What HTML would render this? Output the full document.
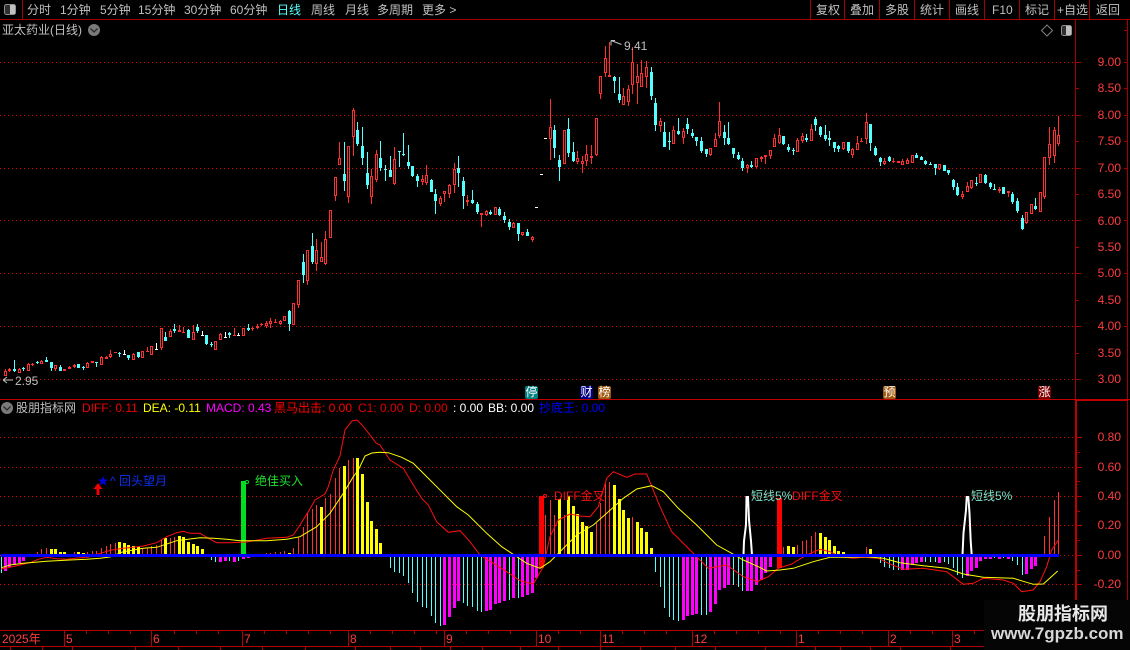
<!DOCTYPE html>
<html><head><meta charset="utf-8"><style>
html,body{margin:0;padding:0;background:#000;}
#p{position:relative;width:1130px;height:650px;overflow:hidden;background:#000;font:12px/14px "Liberation Sans","WenQuanYi Zen Hei","Noto Sans CJK SC",sans-serif;color:#c0c0c0;}
#p div{position:absolute;white-space:nowrap;}
#s{position:absolute;left:0;top:0;}
.a{color:#ff3c3c;width:40px;text-align:right;left:1081px;}
.b{color:#fff;width:13px;height:13px;top:386px;border-radius:2px;text-align:center;line-height:13px;}
.g{color:#ff3c3c;top:632px;}
</style></head><body><div id="p">
<svg id="s" width="1130" height="650" shape-rendering="crispEdges">
<g stroke="#e00000" stroke-dasharray="1 3" fill="none">
<path d="M0 62.5H1075M0 115.5H1075M0 168.5H1075M0 220.5H1075M0 273.5H1075M0 326.5H1075M0 379.5H1075M0 437.5H1075M0 467.5H1075M0 496.5H1075M0 525.5H1075M0 584.5H1075M0 555.5H1075"/>
</g>
<g stroke="#a80000" fill="none">
<path d="M0 19.5H1130M22.5 0V19M810.5 0V19M844.5 0V19M879.5 0V19M914.5 0V19M949.5 0V19M984.5 0V19M1019.5 0V19M1054.5 0V19M1089.5 0V19"/>
<path d="M1075.5 20V400M1127.5 20V600"/>
<path d="M1076 62.5H1081M1076 88.5H1079M1076 115.5H1081M1076 141.5H1079M1076 168.5H1081M1076 194.5H1079M1076 220.5H1081M1076 247.5H1079M1076 273.5H1081M1076 300.5H1079M1076 326.5H1081M1076 353.5H1079M1076 379.5H1081"/>
<path d="M1077 437.5H1082M1077 452.5H1080M1077 467.5H1082M1077 481.5H1080M1077 496.5H1082M1077 511.5H1080M1077 525.5H1082M1077 540.5H1080M1077 555.5H1082M1077 570.5H1080M1077 584.5H1082"/>
<path d="M1124 30.5H1127M1124 62.5H1127M1124 88.5H1127M1124 115.5H1127M1124 141.5H1127M1124 168.5H1127M1124 220.5H1127M1124 273.5H1127M1124 326.5H1127"/>
</g>
<path id="cr" fill="#ff3030"/>
<path id="cc" fill="#54ffff"/>
<path id="cw" fill="#ffffff"/>
<path id="bc" fill="#54ffff"/>
<path id="bm" fill="#ff00ff"/>
<path id="br" fill="#ff3030"/>
<path id="by" fill="#ffff00"/>
<rect x="539" y="496" width="5" height="72" fill="#ff0000"/>
<rect x="777" y="498" width="5" height="70" fill="#ff0000"/>
<rect x="241" y="481" width="5" height="74" fill="#00e020"/>
<g fill="none" shape-rendering="auto">
<polyline id="ld" stroke="#ff1010" stroke-width="1"/>
<polyline id="le" stroke="#ffff00" stroke-width="1"/>
<polyline stroke="#fff" stroke-width="2" points="743.5,555 744,541 746,525 746.5,497 748,497 749,520 751,541 752,555"/>
<polyline stroke="#fff" stroke-width="2" points="962.5,555 963.5,533 966,510 966.7,497 968.3,497 969.5,513 970.7,541 971.7,555"/>
<circle cx="247" cy="482" r="1.5" stroke="#00e020"/>
<circle cx="545" cy="496" r="1.5" stroke="#ff1010"/>
<path d="M3 380H13M3 380l4-3M3 380l4 3" stroke="#c0c0c0"/>
<path d="M621.5 44.5L611 40.5M611 40.5h4M611 40.5v5" stroke="#c0c0c0"/>
<path d="M103 476l1.3 3.4 3.7.2-2.9 2.3 1 3.6-3.1-2-3.1 2 1-3.6-2.9-2.3 3.7-.2z" fill="#0000e0"/>
</g>
<rect x="1" y="554" width="1058" height="3" fill="#0000ff"/>
<path d="M98 483l-4.5 6h3v6h3v-6h3z" fill="#f00000"/>
<rect x="0" y="399" width="1130" height="1" fill="#c00000"/>
<rect x="1075" y="399" width="53" height="2" fill="#c00000"/>
<rect x="1075" y="399" width="2" height="201" fill="#c00000"/>
<g stroke="#b40000" fill="none">
<path id="tk" d="M0 630.5H984M0 646.5H984M64.5 630V646M151.5 630V646M242.5 630V646M348.5 630V646M444.5 630V646M536.5 630V646M600.5 630V646M692.5 630V646M796.5 630V646M888.5 630V646M952.5 630V646"/>
</g>
<g shape-rendering="auto" fill="none">
<circle cx="94" cy="30" r="6" fill="#7a7a7a"/><path d="M90.5 28.5l3.5 3.5 3.5-3.5" stroke="#2a2a2a" stroke-width="1.3"/>
<circle cx="7" cy="408" r="6" fill="#7a7a7a"/><path d="M3.5 406.5l3.5 3.5 3.5-3.5" stroke="#2a2a2a" stroke-width="1.3"/>
<path d="M1047 25l5.5 5.5-5.5 5.5-5.5-5.5z" stroke="#808080"/>
<rect x="4.5" y="4.5" width="11" height="10" rx="2" stroke="#909090" fill="#303030"/><rect x="10" y="5" width="5" height="9" fill="#c0c0c0"/>
<rect x="1061.5" y="25.5" width="10" height="10" rx="2" stroke="#909090" fill="#303030"/><rect x="1066" y="26" width="5" height="9" fill="#c0c0c0"/>
</g>
</svg>

<div style="left:27px;top:3px">分时</div>
<div style="left:60px;top:3px">1分钟</div>
<div style="left:100px;top:3px">5分钟</div>
<div style="left:138px;top:3px">15分钟</div>
<div style="left:184px;top:3px">30分钟</div>
<div style="left:230px;top:3px">60分钟</div>
<div style="left:277px;top:3px;color:#54ffff">日线</div>
<div style="left:311px;top:3px">周线</div>
<div style="left:345px;top:3px">月线</div>
<div style="left:377px;top:3px">多周期</div>
<div style="left:422px;top:3px">更多 &gt;</div>
<div style="left:816px;top:3px">复权</div>
<div style="left:850px;top:3px">叠加</div>
<div style="left:885px;top:3px">多股</div>
<div style="left:920px;top:3px">统计</div>
<div style="left:955px;top:3px">画线</div>
<div style="left:992px;top:3px">F10</div>
<div style="left:1025px;top:3px">标记</div>
<div style="left:1057px;top:3px">+自选</div>
<div style="left:1096px;top:3px">返回</div>
<div style="left:2px;top:23px">亚太药业(日线)</div>
<div style="left:624px;top:39px">9.41</div>
<div style="left:15px;top:374px">2.95</div>

<div class="a" style="top:55px">9.00</div>
<div class="a" style="top:81px">8.50</div>
<div class="a" style="top:108px">8.00</div>
<div class="a" style="top:134px">7.50</div>
<div class="a" style="top:161px">7.00</div>
<div class="a" style="top:187px">6.50</div>
<div class="a" style="top:214px">6.00</div>
<div class="a" style="top:240px">5.50</div>
<div class="a" style="top:266px">5.00</div>
<div class="a" style="top:293px">4.50</div>
<div class="a" style="top:319px">4.00</div>
<div class="a" style="top:346px">3.50</div>
<div class="a" style="top:372px">3.00</div>
<div class="a" style="top:430px">0.80</div>
<div class="a" style="top:460px">0.60</div>
<div class="a" style="top:489px">0.40</div>
<div class="a" style="top:518px">0.20</div>
<div class="a" style="top:548px">0.00</div>
<div class="a" style="top:577px">-0.20</div>

<div class="b" style="left:525px;background:#008080">停</div>
<div class="b" style="left:580px;background:#000080">财</div>
<div class="b" style="left:598px;background:#a05a10">榜</div>
<div class="b" style="left:883px;background:#a05a10">预</div>
<div class="b" style="left:1038px;background:#800000">涨</div>

<div style="left:16px;top:401px">股朋指标网</div>
<div style="left:82px;top:401px;color:#f00000">DIFF: 0.11</div>
<div style="left:143px;top:401px;color:#ffff00">DEA: -0.11</div>
<div style="left:206px;top:401px;color:#ff00ff">MACD: 0.43</div>
<div style="left:274px;top:401px;color:#ff0000">黑马出击: 0.00</div>
<div style="left:358px;top:401px;color:#e00000">C1: 0.00</div>
<div style="left:409px;top:401px;color:#e00000">D: 0.00</div>
<div style="left:453px;top:401px;color:#fff">: 0.00</div>
<div style="left:488px;top:401px;color:#fff">BB: 0.00</div>
<div style="left:539px;top:401px;color:#0000ff">抄底王: 0.00</div>

<div style="left:110px;top:474px;color:#1030f0">^ 回头望月</div>
<div style="left:255px;top:474px;color:#20e030">绝佳买入</div>
<div style="left:554px;top:489px;color:#f01010">DIFF金叉</div>
<div style="left:751px;top:489px;color:#80e0c8">短线5%</div>
<div style="left:792px;top:489px;color:#f01010">DIFF金叉</div>
<div style="left:971px;top:489px;color:#80e0c8">短线5%</div>

<div class="g" style="left:2px">2025年</div>
<div class="g" style="left:66px">5</div>
<div class="g" style="left:153px">6</div>
<div class="g" style="left:244px">7</div>
<div class="g" style="left:350px">8</div>
<div class="g" style="left:446px">9</div>
<div class="g" style="left:538px">10</div>
<div class="g" style="left:602px">11</div>
<div class="g" style="left:694px">12</div>
<div class="g" style="left:798px">1</div>
<div class="g" style="left:890px">2</div>
<div class="g" style="left:954px">3</div>

<div style="left:984px;top:600px;width:146px;height:50px;background:#050505"></div>
<div style="left:1018px;top:603px;font:bold 18px/22px 'Liberation Sans','Noto Sans CJK SC',sans-serif;color:#e8e8e8">股朋指标网</div>
<div style="left:991px;top:624px;font:bold 17px/20px 'Liberation Sans',sans-serif;color:#d8d8d8">www.7gpzb.com</div>
</div>
<script>
var P={cr:'',cc:'',cw:'',bc:'',bm:'',br:'',by:''};
function R(k,x,y,w,h){if(h<1)h=1;P[k]+='M'+x+' '+y+'h'+w+'v'+h+'h'+(-w)+'z';}
var idx=0;
function X(i){return Math.floor(5.3+4.58*i);}
function D(y0,s){s.split(',').forEach(function(q){
 var a=q.trim().split(' '),c=a[0],x=X(idx);idx++;
 var f=function(v){return Math.round(y0+(+v)/3);};
 var h=f(a[1]),t=f(a[2]),b=f(a[3]),l=f(a[4]);
 if(b<=t)b=t+1;
 if(c=='r'){
  if(t>h)R('cr',x,h,1,t-h);
  if(l>b)R('cr',x,b,1,l-b);
  if(b-t<=2){R('cr',x-1,t,3,b-t);}
  else{R('cr',x-1,t,3,1);R('cr',x-1,b-1,3,1);R('cr',x-1,t,1,b-t);R('cr',x+1,t,1,b-t);}
 }else{
  var k=c=='w'?'cw':'cc';
  R(k,x,h,1,l-h);R(k,x-1,t,3,b-t);
 }
});}
D(300,"r 207 212 228 228,r 204 206 213 215,c 180 208 213 216,r 204 208 218 218,c 200 204 208 212,r 190 193 212 212,r 190 192 194 198,c 183 185 190 192,r 180 182 191 191,c 172 180 187 187,c 186 186 204 212,r 194 196 208 212,c 196 200 212 212,r 207 208 212 212,r 197 202 206 206,r 192 194 202 204,c 192 192 205 205,c 197 201 205 210,r 186 190 203 204,r 182 183 190 190,c 185 186 190 200,r 168 170 194 195,r 168 170 178 178,r 150 162 172 175,r 157 157 160 160,c 155 158 163 170,w 150 161 163 163,c 165 165 175 180,r 160 161 179 180,c 155 156 172 174,r 153 154 173 173,r 141 153 155 155,r 138 138 164 164,w 130 146 148 150,r 84 84 145 150,c 97 110 122 124,r 88 92 110 112,c 72 88 93 100,r 76 91 95 95,r 80 95 97 97,c 88 90 113 113,r 75 96 120 120,c 72 82 94 100,w 93 105 107 108,c 105 105 132 135,c 125 131 134 142,r 124 124 149 149,r 100 103 120 121,w 97 110 113 113,c 95 100 106 113,r 83 106 108 108,w 100 105 107 108,r 85 85 107 107,c 72 85 90 92,r 80 83 88 92,r 72 77 85 88,r 70 72 76 78,r 63 70 78 83,r 55 64 72 83,r 58 65 68 70,r 60 62 72 75,r 48 49 63 63,c 30 33 73 92,r 10 10 76 76");
D(200,"r 240 240 315 325,c 162 186 225 250,r 150 150 242 254,c 98 138 186 192,r 117 150 193 213,r 125 172 186 186,r 93 118 192 195");
D(100,"r 331 331 413 413,r 232 232 288 303,r 126 175 195 195,c 126 222 243 273,r 138 138 290 308,r 24 30 110 168,c 67 91 133 138,c 81 138 174 195,c 156 219 255 267,r 207 229 290 312,r 150 163 240 246,c 123 174 204 213,c 195 207 210 243,c 168 210 231 231,r 141 178 252 255,c 153 153 156 201,c 99 162 165 168,c 135 186 198 207,c 198 198 228 231,c 222 228 243 261,r 225 237 246 255,r 195 225 249 255,c 237 240 276 276,c 267 282 303 342,r 288 294 312 318,r 273 274 282 306,r 252 255 282 294,r 189 207 255 279,c 168 204 219 261,c 231 243 288 327,r 285 300 306 318,c 270 300 309 312,c 306 312 336 342,r 339 339 345 381,r 330 333 345 348,c 330 336 342 345,r 321 321 345 345,c 321 327 345 348,c 336 348 360 369,c 357 366 381 390,r 367 369 384 384,c 369 369 402 423,r 396 396 405 408,c 387 396 408 408,r 408 411 420 426,w 322 322 324 324,w 223 223 225 225,w 115 115 117 117");
D(30,"r 207 292 326 390,c 285 300 354 384,c 375 390 411 453,r 300 300 402 402,c 264 297 369 381,c 336 366 393 396,r 363 384 396 402,r 378 393 403 429,r 345 372 393 408,r 345 378 384 402,r 264 264 375 378,r 138 138 192 207,r 48 84 129 141,r 36 136 141 141,c 138 141 153 189,c 141 192 210 219,r 174 198 225 225,r 165 177 216 228,r 51 97 165 192,r 102 138 159 222,r 90 129 171 171,r 93 111 141 174,c 111 126 198 210,c 204 219 285 303,r 264 273 288 306,c 276 306 351 351,c 306 333 336 360,r 288 300 342 342,c 264 303 312 315,r 294 303 324 342,c 264 282 297 312,c 297 309 318 324,c 321 321 333 348,c 321 333 363 369,c 357 357 372 381,r 354 354 375 378,r 309 327 351 351,r 216 273 318 324,c 285 306 324 345,c 276 324 342 345,c 354 354 372 384,c 366 375 387 390,c 384 393 414 423,r 402 405 414 429,c 393 405 411 414,r 384 384 411 414,r 378 381 387 396,r 375 375 381 402,r 360 360 378 387,r 312 324 351 351,r 294 315 339 342,c 318 318 342 345,c 342 351 360 366,c 354 360 363 375,r 324 330 366 366,r 309 318 333 339,c 312 324 330 336");
D(100,"r 72 87 123 123,c 52 57 75 93,c 78 81 105 111,c 75 105 117 123,c 93 114 120 138,c 126 126 144 156,c 135 138 147 156,r 126 126 147 150,c 126 126 153 159,r 144 147 165 174,r 108 129 150 150,r 114 123 126 126,r 39 66 117 132,c 72 72 129 153,c 138 144 165 168,c 171 174 186 198,r 174 183 192 195,c 168 171 183 186,r 174 182 184 189,r 183 183 189 189,r 177 183 194 195,r 174 180 192 192,r 165 165 189 189,c 159 165 174 174,c 168 171 180 180,c 180 183 192 195,c 186 192 195 195,c 192 192 204 225,r 192 192 207 210,c 195 195 213 213,c 210 210 219 225,c 237 240 261 270,c 249 261 285 288,r 273 282 291 297,r 246 258 276 276,r 240 240 264 267,c 231 249 252 258,r 222 222 249 249,c 222 225 249 252,c 246 249 261 267,c 252 267 270 270,r 261 267 273 279,c 261 261 282 282,r 273 273 279 291,c 276 282 306 312,c 294 303 333 339,c 345 354 387 390,r 336 336 369 372,r 312 312 342 342,c 294 318 327 330,r 276 276 336 336,r 171 171 291 297,r 81 132 174 195,r 81 90 168 189,r 48 105 132 138");
function B(y0,start,s){var i=start;s.trim().split(/\s+/).forEach(function(q){
 if(q!='-'){var c=q[0],v=Math.round(y0+(+q.slice(1))/3),x=X(i),k='b'+c,thick=(c=='y'||c=='m');
  var y=v<555?v:555,h=v<555?555-v:v-555;
  if(thick)R(k,x-1,y,3,h);else R(k,x,y,1,h);}
 i++;});}
R('bc',1,555,1,18);
B(470,0,"m303 m290 m285 m280 m272 - - r247 r237 r235 y237 y237 y246 y246 - r247 y246 y249 r245 r243 r242 r235 r227 r222 r219 y216 y219 y225 y228 y232 r235 r233 r228 r224 r209 y204 r204 r201 y198 y201 y216 y222 y228 y237 - c270 c275 m275 m273 c272 m275 c272 m267 m263 - - - r250 r248 r247 r247 r243 y249 r234 r200 r172 r128 r118 r105 y111 r83 r72 r24 r-6 y-12 r-30 r-36 y-36 y12 y96 y153 y177 y219 -");
B(400,84,"c505 c517 c520 c527 c550 c580 c606 c621 c624 c648 c668 c678 m675 m650 m624 m603 c610 c618 c622 c634 c636 m632 m630 m612 m608 m603 c600 m594 c594 m590 m586 m579 m535 - r345 r300 r345 y298 r345 y288 y318 y342 y366 y378 y396 r368 r308 r252 r246 y255 y297 y330 y354 r351 y366 y384 y396 y444 c515 c560 c625 c650 c660 c662 m660 m648 m645 m642 c645 c645 m636 m612 m570 m565 m555 c555 c560 c572 m573 m573 m555 m540 m520 m500 - - r440 y438 y440 r435 r424 r420 r408 r396 y399 y411 y420 y438 y453 y456 - - - - r441 y447 - c490 c500 c505 c510 c510 m510 m510 m495 m490 m487 c487 c487 c487 m490 c487 c492 c505 c525 c533 m528 m513 m503 m483 m478 m477 c475 m477 c475 m477 c483 c495 c525 m522 m507 m498 - r408 r350 r300 r276");
for(var k in P)document.getElementById(k).setAttribute('d',P[k]);
function Z(ox,oy,a){var o=[];for(var i=0;i<a.length;i+=2)o.push((ox+a[i]/3).toFixed(1)+','+(oy+a[i+1]/3).toFixed(1));return o.join(' ');}
var d=Z(0,470,[4,297,30,292,60,285,90,278,115,268,140,262,170,266,200,268,240,263,265,262,300,250,335,240,370,235,400,232,430,228,470,218,500,200,530,188,550,184,570,190,600,190,625,205,650,218,690,218,740,216,800,205,860,202,880,195,900,165,925,125,945,90,975,72,985,50,1000,0])+' 340,456 345,430 352,421 357,420 362,425 370,435 376,443 '+Z(380,400,[0,135,30,180,70,205,100,255,125,295,145,315,170,365,205,397,240,392,270,425,300,465,340,490,380,515,420,542,460,552,490,500,510,410,535,360,570,342,600,348,630,350,655,320,680,235,700,215,740,232,765,222,800,222,840,320,875,395,930,450,985,505,1040,495,1090,530,1135,545])+' '+Z(750,400,[25,543,55,530,85,505,125,492,170,465,210,448,240,455,270,470,310,475,340,472,385,475,420,492,460,508,520,505,590,515,640,553,670,550,700,535,760,540,790,550,815,575,850,570,870,545,890,500,905,450,925,420]);
var e=Z(0,470,[4,293,30,285,70,280,105,277,140,274,210,270,260,268,300,265,330,261,370,245,430,235,470,232,530,212,570,207,600,203,640,205,680,208,720,212,800,212,860,208,900,200,950,170,990,130,1030,70,1060,20,1075,0])+' 365,456 372,453 '+Z(380,400,[0,157,25,158,65,172,100,190,135,225,175,265,230,320,265,345,320,400,365,440,410,470,440,490,480,505,510,485,545,450,590,405,640,375,680,340,730,295,770,267,815,257,850,275,895,325,950,375,1010,435,1055,460,1090,480,1135,500])+' '+Z(750,400,[50,513,90,510,130,505,190,485,240,472,300,472,350,470,400,475,450,488,520,497,590,505,640,522,700,532,790,535,850,553,880,552,910,525,923,513]);
document.getElementById('ld').setAttribute('points',d);
document.getElementById('le').setAttribute('points',e);
var t=document.getElementById('tk'),v=t.getAttribute('d');
[[64,152],[152,242],[242,348],[348,444],[444,536],[536,600],[600,692],[692,796],[796,888],[888,952],[952,984]].forEach(function(r){for(var x=r[0]+22;x<r[1]-6;x+=22)v+='M'+(x+.5)+' 630V634';});
[10,42,72,135,178,220,262,305,355,390,420,450,482,520,558,600,640,675,715,765,815,840,870,900,950].forEach(function(x){v+='M'+(x+.5)+' 647V650';});
t.setAttribute('d',v);
</script>
</body></html>
